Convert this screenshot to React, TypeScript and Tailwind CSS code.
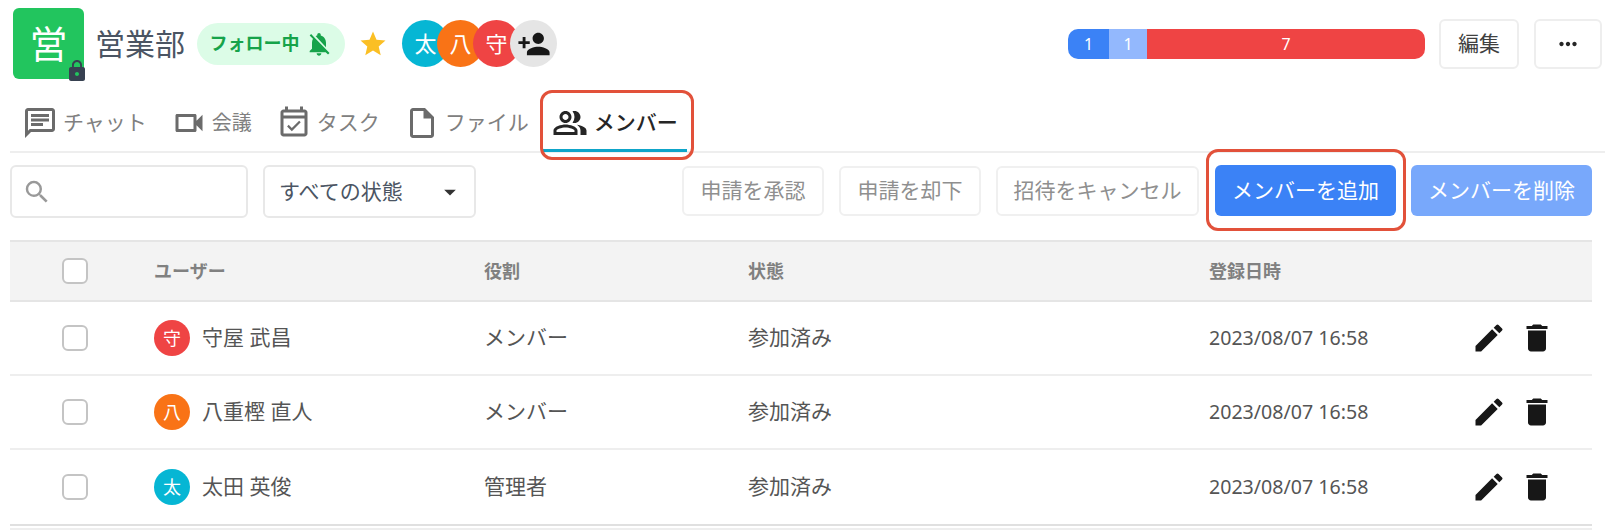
import {
  MdArrowDropDown,
  MdDelete,
  MdEdit,
  MdLock,
  MdMoreHoriz,
  MdNotificationsOff,
  MdOutlineChat,
  MdOutlineEventAvailable,
  MdOutlineInsertDriveFile,
  MdOutlinePeopleAlt,
  MdOutlineVideocam,
  MdPersonAdd,
  MdSearch,
  MdStar,
} from "react-icons/md";

const tabs = [
  { label: "チャット", icon: MdOutlineChat },
  { label: "会議", icon: MdOutlineVideocam, narrow: true },
  { label: "タスク", icon: MdOutlineEventAvailable },
  { label: "ファイル", icon: MdOutlineInsertDriveFile },
];

const members = [
  { initial: "守", name: "守屋 武昌", role: "メンバー", color: "bg-[#ef4444]" },
  { initial: "八", name: "八重樫 直人", role: "メンバー", color: "bg-[#f97316]" },
  { initial: "太", name: "太田 英俊", role: "管理者", color: "bg-[#06b6d4]" },
];

const rowGrid = "grid grid-cols-[144px_330px_264px_461px_262px_1fr] items-center";

function Checkbox() {
  return <div className="ml-[52px] h-[26px] w-[26px] rounded-[6px] border-2 border-[#c4c4c4] bg-white" />;
}

export default function App() {
  return (
    <div className="relative h-[531px] w-[1617px] overflow-hidden bg-white pt-[8px] font-['Noto_Sans','Noto_Sans_CJK_JP',sans-serif] text-[21px] text-[#555]">
      {/* Header */}
      <div className="flex h-[71px] items-center pl-[13px] pr-[15px]">
        <div className="relative flex h-[71px] w-[71px] items-center justify-center rounded-[6px] bg-[#22c55e] text-[38px] text-white">
          営
          <MdLock size={24} className="absolute bottom-[-4px] right-[-5px] text-[#374151]" />
        </div>
        <span className="ml-[11px] text-[30px] text-[#4b5563]">営業部</span>
        <div className="ml-[12px] flex h-[42px] w-[148px] items-center justify-center gap-[5px] rounded-full bg-[#dcfce7] text-[18px] font-bold text-[#16a34a]">
          フォロー中
          <MdNotificationsOff size={28} />
        </div>
        <MdStar size={30} className="ml-[13px] text-[#fbbf24]" />
        <div className="ml-[14px] flex items-center text-[22px] text-white">
          <div className="flex h-[47px] w-[47px] items-center justify-center rounded-full bg-[#06b6d4]">太</div>
          <div className="ml-[-12px] flex h-[47px] w-[47px] items-center justify-center rounded-full bg-[#f97316]">八</div>
          <div className="ml-[-11px] flex h-[47px] w-[47px] items-center justify-center rounded-full bg-[#ef4444]">守</div>
          <div className="ml-[-10px] flex h-[47px] w-[47px] items-center justify-center rounded-full bg-[#e5e5e5] text-[#171717]">
            <MdPersonAdd size={34} />
          </div>
        </div>
        <div className="ml-auto flex h-[30px] w-[357px] overflow-hidden rounded-[10px] text-[16px] text-white">
          <div className="flex w-[41px] items-center justify-center bg-[#3b82f6]">1</div>
          <div className="flex w-[38px] items-center justify-center bg-[#93b8fd]">1</div>
          <div className="flex flex-1 items-center justify-center bg-[#ef4444]">7</div>
        </div>
        <button className="ml-[14px] h-[50px] w-[80px] rounded-[6px] border-2 border-[#eeeeee] text-[#404040]">編集</button>
        <button className="ml-[15px] flex h-[50px] w-[68px] items-center justify-center rounded-[6px] border-2 border-[#eeeeee] text-[#262626]">
          <MdMoreHoriz size={26} />
        </button>
      </div>

      {/* Tabs */}
      <div className="ml-[10px] mt-[11px] flex h-[63px] w-[1595px] items-center border-b-2 border-[#eeeeee] pt-[4px]">
        {tabs.map((tab) => (
          <div
            key={tab.label}
            className={`flex items-center gap-[5px] px-[12px] text-[#808080] ${tab.narrow ? "text-[20px]" : ""}`}
          >
            <tab.icon size={36} className="text-[#6b6b6b]" />
            {tab.label}
          </div>
        ))}
        <div className="relative flex h-full items-center gap-[6px] pl-[11px] pr-[9px] font-medium text-[#262626]">
          <MdOutlinePeopleAlt size={36} />
          メンバー
          <div className="absolute bottom-[-1px] left-0 right-0 h-[3px] bg-[#0ea5c9]" />
        </div>
      </div>

      {/* Toolbar */}
      <div className="ml-[10px] mt-[12px] flex h-[53px] w-[1582px] items-start">
        <div className="flex h-[53px] w-[238px] items-center rounded-[6px] border-2 border-[#e8e8e8] pl-[10px] text-[#999]">
          <MdSearch size={30} />
        </div>
        <div className="ml-[15px] flex h-[53px] w-[213px] items-center justify-between rounded-[6px] border-2 border-[#e8e8e8] pl-[14px] pr-[10px] text-[#4b5563]">
          すべての状態
          <MdArrowDropDown size={28} className="text-[#333]" />
        </div>
        <div className="ml-auto flex items-center">
          <button className="h-[50px] w-[142px] rounded-[6px] border-2 border-[#f0f0f0] text-[#8f8f8f]">申請を承認</button>
          <button className="ml-[15px] h-[50px] w-[142px] rounded-[6px] border-2 border-[#f0f0f0] text-[#8f8f8f]">申請を却下</button>
          <button className="ml-[15px] h-[50px] w-[203px] rounded-[6px] border-2 border-[#f0f0f0] text-[#8f8f8f]">招待をキャンセル</button>
          <button className="ml-[16px] h-[51px] w-[181px] rounded-[6px] bg-[#3b82f6] text-white">メンバーを追加</button>
          <button className="ml-[15px] h-[51px] w-[181px] rounded-[6px] bg-[#78a8fb] text-white">メンバーを削除</button>
        </div>
      </div>

      {/* Table */}
      <div className="ml-[10px] mt-[22px] w-[1582px] border-b-2 border-[#e0e0e0]">
        <div className={`${rowGrid} h-[62px] border-y-2 border-[#e5e5e5] bg-[#f3f3f3] text-[18px] font-bold text-[#808080]`}>
          <Checkbox />
          <span>ユーザー</span>
          <span>役割</span>
          <span>状態</span>
          <span>登録日時</span>
          <span />
        </div>
        {members.map((m, i) => (
          <div key={m.name} className={`${rowGrid} h-[74px] ${i < 2 ? "border-b-2 border-[#eeeeee]" : ""}`}>
            <Checkbox />
            <div className="flex items-center gap-[12px]">
              <div className={`flex h-[36px] w-[36px] items-center justify-center rounded-full text-[18px] text-white ${m.color}`}>
                {m.initial}
              </div>
              {m.name}
            </div>
            <span>{m.role}</span>
            <span>参加済み</span>
            <span className="text-[19.6px]">2023/08/07 16:58</span>
            <div className="flex items-center gap-[12px] text-[#171717]">
              <MdEdit size={36} />
              <MdDelete size={36} />
            </div>
          </div>
        ))}
      </div>
      <div className="ml-[10px] mt-[2px] h-[2px] w-[1582px] bg-[#eeeeee]" />

      {/* Red highlights */}
      <div className="absolute left-[540px] top-[90px] h-[70px] w-[154px] rounded-[12px] border-[3px] border-[#e2513a]" />
      <div className="absolute left-[1206px] top-[149px] h-[82px] w-[200px] rounded-[12px] border-[3px] border-[#e2513a]" />
    </div>
  );
}
